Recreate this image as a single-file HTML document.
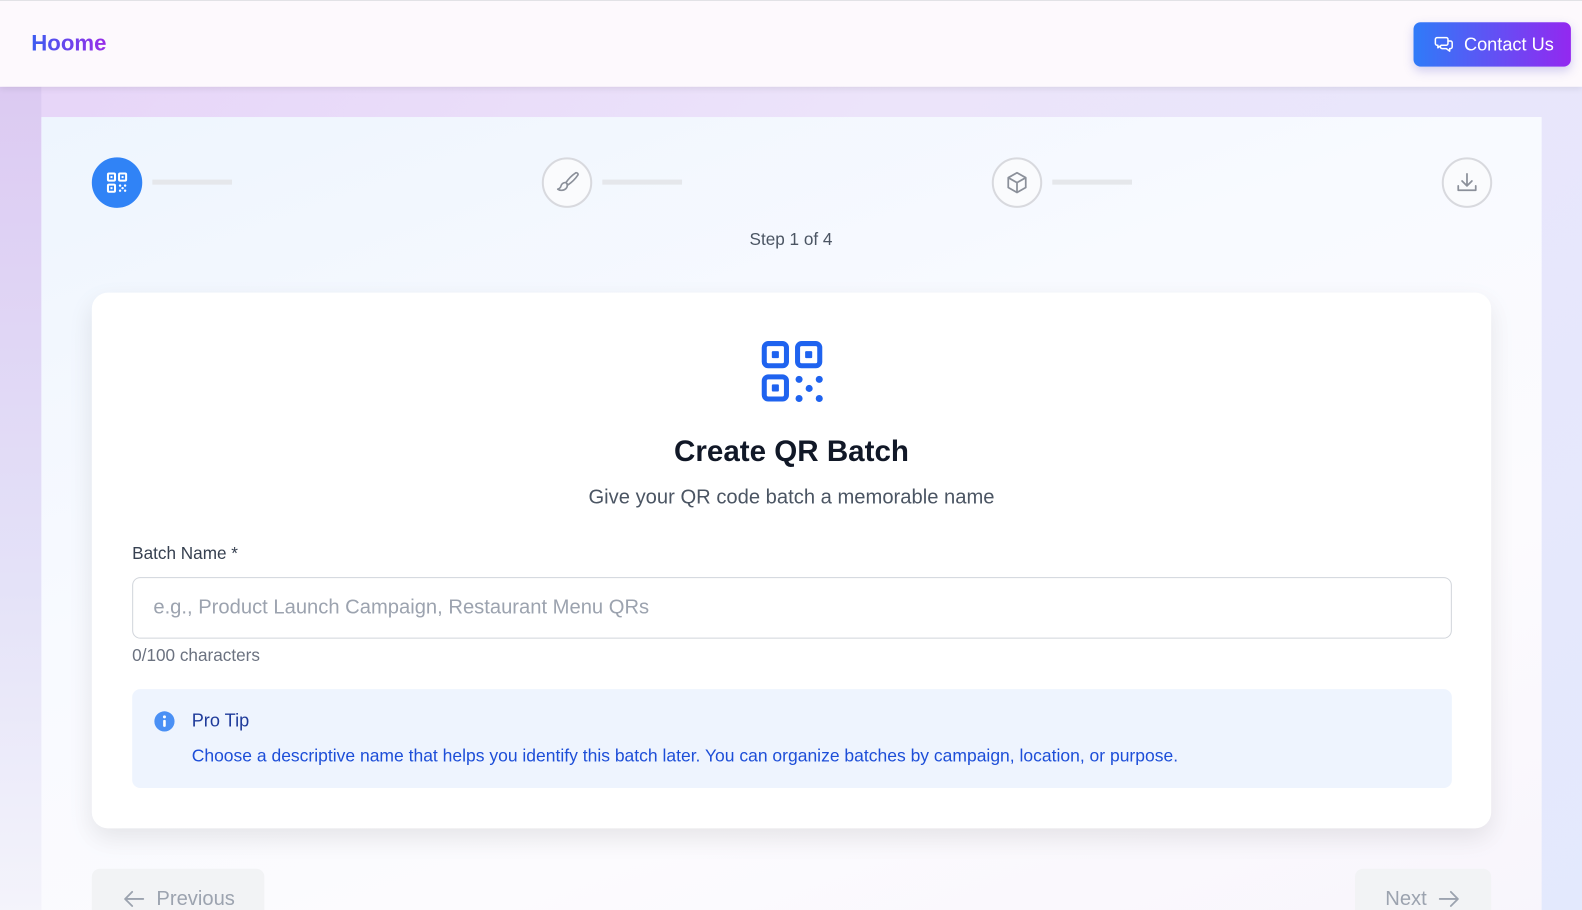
<!DOCTYPE html>
<html><head><meta charset="utf-8"><style>
*{box-sizing:border-box;margin:0;padding:0}
html,body{width:1582px;height:910px;overflow:hidden}
body{font-family:"Liberation Sans",Arial,sans-serif;background:linear-gradient(135deg,#e6d3f8 0%,#ece4fa 40%,#e3e9fd 100%);position:relative}
#w{position:absolute;left:0;top:0;width:1568px;height:902px;transform:scale(1.00893);transform-origin:0 0}
.hdr{position:absolute;left:0;top:0;width:1568px;height:86px;background:#fdf9fd;border-top:1px solid #e2e2e6;box-shadow:0 2px 6px rgba(0,0,0,.08);z-index:2}
.logo{position:absolute;left:31px;top:29px;font-size:22px;font-weight:bold;background:linear-gradient(90deg,#3b5cf0,#9a2ce8);-webkit-background-clip:text;color:transparent}
.cbtn{position:absolute;left:1401px;top:21px;width:156px;height:44px;border-radius:7px;background:linear-gradient(90deg,#2f7bf8,#9328f0);color:#fff;font-size:18px;box-shadow:0 4px 10px rgba(80,80,200,.25);display:flex;align-items:center;padding-left:20px;gap:10px}
.leftfade{position:absolute;left:0;top:86px;width:41px;height:824px;background:linear-gradient(180deg,#dccaf2,#e4e2f8 60%,#f4f4fb)}
.panel{position:absolute;left:41px;top:116px;width:1487px;height:800px;background:linear-gradient(160deg,#eef5fe 0%,#f8faff 40%,#fcfbfe 70%,#f8f5fc 100%)}
.step{position:absolute;top:156px;width:50px;height:50px;border-radius:50%;border:2px solid #d8d9de;background:#fafbfd;display:flex;align-items:center;justify-content:center}
.line{position:absolute;top:178px;width:79px;height:5px;background:#e5e7eb}
.card{position:absolute;left:91px;top:290px;width:1387px;height:531px;background:#fff;border-radius:16px;box-shadow:0 10px 25px rgba(0,0,0,.09)}
.nav{position:absolute;top:861px;height:60px;background:#f2f3f5;border-radius:8px;color:#9ca3af;font-size:20px;display:flex;align-items:center;gap:10px}
</style></head><body><div id="w">
<div class="hdr">
<div class="logo">Hoome</div>
<div class="cbtn"><svg width="20" height="20" viewBox="0 0 24 24" fill="none" stroke="#fff" stroke-width="1.8" stroke-linecap="round" stroke-linejoin="round"><path d="M4 4h11a2 2 0 0 1 2 2v5a2 2 0 0 1-2 2H9l-4 3v-3H4a2 2 0 0 1-2-2V6a2 2 0 0 1 2-2z"/><path d="M17 8h3a2 2 0 0 1 2 2v5a2 2 0 0 1-2 2h-1v3l-4-3h-5a2 2 0 0 1-2-2"/></svg>Contact Us</div>
</div>
<div class="leftfade"></div>
<div class="panel"></div>
<div class="step" style="left:91px;background:#3083f6;border-color:#3083f6"><svg width="24" height="24" viewBox="0 0 24 24" fill="none" stroke="#fff" stroke-width="2"><rect x="3" y="3" width="7" height="7" rx="1"/><rect x="14" y="3" width="7" height="7" rx="1"/><rect x="3" y="14" width="7" height="7" rx="1"/><g fill="#fff" stroke="none"><rect x="5.5" y="5.5" width="2" height="2"/><rect x="16.5" y="5.5" width="2" height="2"/><rect x="5.5" y="16.5" width="2" height="2"/><circle cx="15" cy="15" r="1.2"/><circle cx="20" cy="15" r="1.2"/><circle cx="17.5" cy="17.5" r="1.2"/><circle cx="15" cy="20" r="1.2"/><circle cx="20" cy="20" r="1.2"/></g></svg></div>
<div class="line" style="left:151px"></div>
<div class="step" style="left:537px"><svg width="26" height="26" viewBox="0 0 24 24" fill="none" stroke="#8b909a" stroke-width="1.5" stroke-linecap="round" stroke-linejoin="round"><path d="M20 3c-3 2-7 6-9 9l2 2c3-2 7-6 9-9 .5-1-1-2.5-2-2z"/><path d="M11 12c-2-.3-4 1-4.5 3-.3 1.5-1.5 2.5-3 3 2 1.5 5.5 1.5 7.5-.5 1.2-1.2 1.5-2.8 1-3.5"/></svg></div>
<div class="line" style="left:597px"></div>
<div class="step" style="left:983px"><svg width="26" height="26" viewBox="0 0 24 24" fill="none" stroke="#8b909a" stroke-width="1.6" stroke-linejoin="round"><path d="M12 3l8 4.5v9L12 21l-8-4.5v-9z"/><path d="M4 7.5l8 4.5 8-4.5M12 12v9"/></svg></div>
<div class="line" style="left:1043px"></div>
<div class="step" style="left:1429px"><svg width="26" height="26" viewBox="0 0 24 24" fill="none" stroke="#8b909a" stroke-width="1.6" stroke-linecap="round" stroke-linejoin="round"><path d="M12 4v11M7.5 10.5L12 15l4.5-4.5M4 15v4h16v-4"/></svg></div>
<div style="position:absolute;left:0;width:1568px;top:228px;text-align:center;font-size:17px;color:#4b5563">Step 1 of 4</div>
<div class="card">
<svg style="position:absolute;left:661px;top:45px" width="66" height="66" viewBox="0 0 66 66"><g fill="none" stroke="#1f63ef" stroke-width="5"><rect x="5.5" y="5.5" width="22" height="22" rx="4"/><rect x="38.5" y="5.5" width="22" height="22" rx="4"/><rect x="5.5" y="38.5" width="22" height="22" rx="4"/></g><g fill="#1f63ef"><rect x="13" y="13" width="7" height="7" rx="1"/><rect x="46" y="13" width="7" height="7" rx="1"/><rect x="13" y="46" width="7" height="7" rx="1"/><circle cx="40" cy="41" r="3.5"/><circle cx="60" cy="41" r="3.5"/><circle cx="50" cy="50" r="3.5"/><circle cx="40" cy="60" r="3.5"/><circle cx="60" cy="60" r="3.5"/></g></svg>
<div style="position:absolute;left:0;width:1387px;top:141px;text-align:center;font-size:29.3px;font-weight:bold;color:#111827">Create QR Batch</div>
<div style="position:absolute;left:0;width:1387px;top:192px;text-align:center;font-size:20px;color:#4b5563">Give your QR code batch a memorable name</div>
<div style="position:absolute;left:40px;top:249px;font-size:17px;color:#374151">Batch Name *</div>
<div style="position:absolute;left:40px;top:282px;width:1308px;height:61px;border:1px solid #d1d5db;border-radius:8px;padding-left:20px;line-height:59px;font-size:20px;color:#9ca3af">e.g., Product Launch Campaign, Restaurant Menu QRs</div>
<div style="position:absolute;left:40px;top:350px;font-size:17px;color:#6b7280">0/100 characters</div>
<div style="position:absolute;left:40px;top:393px;width:1308px;height:98px;background:#eef4fe;border-radius:8px">
<svg style="position:absolute;left:21px;top:21px" width="22" height="22" viewBox="0 0 22 22"><circle cx="11" cy="11" r="10" fill="#4a90f5"/><circle cx="11" cy="6.5" r="1.5" fill="#fff"/><rect x="9.7" y="9.5" width="2.6" height="7" rx="1" fill="#fff"/></svg>
<div style="position:absolute;left:59px;top:21px;font-size:18px;color:#1e3a9a">Pro Tip</div>
<div style="position:absolute;left:59px;top:56px;font-size:17.35px;color:#1d4ed8">Choose a descriptive name that helps you identify this batch later. You can organize batches by campaign, location, or purpose.</div>
</div>
</div>
<div class="nav" style="left:91px;width:171px;padding-left:30px"><svg width="24" height="20" viewBox="0 0 24 20" fill="none" stroke="#9ca3af" stroke-width="1.8" stroke-linecap="round" stroke-linejoin="round"><path d="M21 10H3M10 3l-7 7 7 7"/></svg>Previous</div>
<div class="nav" style="left:1343px;width:135px;padding-left:30px">Next<svg width="24" height="20" viewBox="0 0 24 20" fill="none" stroke="#9ca3af" stroke-width="1.8" stroke-linecap="round" stroke-linejoin="round"><path d="M3 10h18M14 3l7 7-7 7"/></svg></div>
</div></body></html>
